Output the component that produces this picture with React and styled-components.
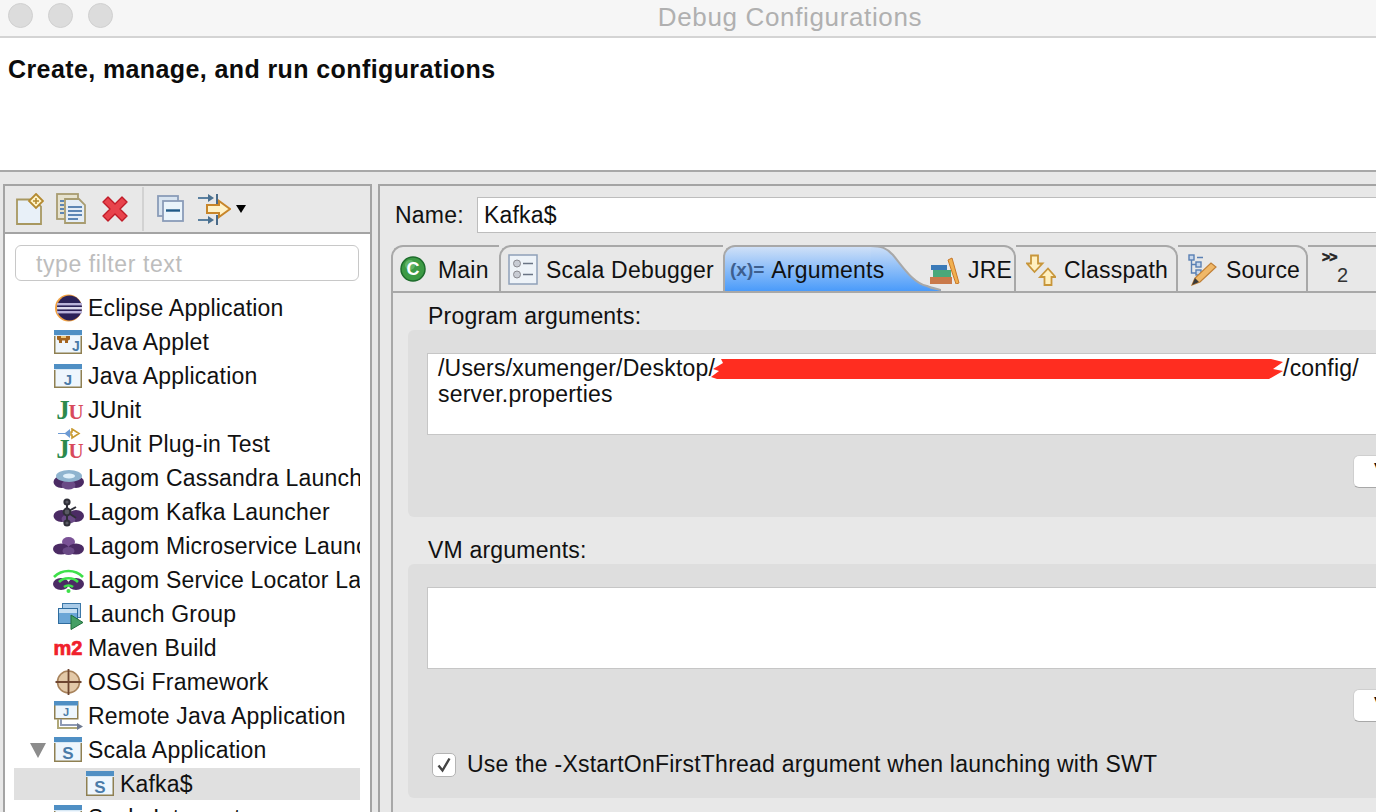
import React from 'react';
import styled, { createGlobalStyle } from 'styled-components';

const GlobalStyle = createGlobalStyle`
  html, body { margin: 0; padding: 0; background: #e8e8e8; }
  #root { width: 1376px; height: 812px; overflow: hidden; }
  * { box-sizing: border-box; }
`;

const Dialog = styled.div`
  width: 1580px;
  height: 812px;
  display: flex;
  flex-direction: column;
  background: #e8e8e8;
  font-family: "Liberation Sans", Arial, sans-serif;
  font-size: 23px;
  letter-spacing: 0.2px;
  color: #111;
`;

const TitleBar = styled.div`
  position: relative;
  height: 38px;
  flex: none;
  background: #f6f6f6;
  border-bottom: 2px solid #d4d4d4;
  display: flex;
  align-items: center;
  justify-content: center;
  padding-bottom: 2px;
`;

const Lights = styled.div`
  position: absolute;
  left: 8px;
  top: 3px;
  display: flex;
  gap: 15px;
`;

const Light = styled.span`
  width: 25px;
  height: 25px;
  border-radius: 50%;
  background: #dcdcdc;
  border: 1px solid #d0d0d0;
`;

const Title = styled.div`
  font-size: 26px;
  letter-spacing: 0.65px;
  color: #b0b0b0;
`;

const Banner = styled.div`
  height: 134px;
  flex: none;
  background: #fff;
  border-bottom: 2px solid #a8a8a8;
  padding: 15px 8px 0;
  font-size: 25px;
  font-weight: 700;
  line-height: 33px;
  letter-spacing: 0.4px;
  color: #0c0c0c;
`;

const Body = styled.div`
  flex: 1;
  min-height: 0;
  display: flex;
  padding: 12px 0 0 3px;
  gap: 6px;
`;

const LeftPane = styled.div`
  width: 369px;
  flex: none;
  border: 2px solid #a4a4a4;
  border-bottom: 0;
  background: #fff;
  display: flex;
  flex-direction: column;
  overflow: hidden;
`;

const Toolbar = styled.div`
  height: 48px;
  flex: none;
  background: #e8e8e8;
  border-bottom: 2px solid #a4a4a4;
  display: flex;
  align-items: center;
  padding-left: 11px;
`;

const ToolButton = styled.span`
  display: flex;
  flex: none;
  margin-right: ${(p) => p.$gap || 0}px;
`;

const ToolSeparator = styled.span`
  width: 2px;
  height: 44px;
  margin-right: 13px;
  background: #d2d2d2;
`;

const FilterWrap = styled.div`
  padding: 11px 11px 10px 10px;
  flex: none;
`;

const FilterInput = styled.div`
  height: 36px;
  border: 1px solid #c8c8c8;
  border-radius: 6px;
  padding: 2px 0 0 20px;
  display: flex;
  align-items: center;
  font-size: 23px;
  letter-spacing: 0.6px;
  color: #bdbdbd;
`;

const Tree = styled.div`
  flex: 1;
  min-height: 0;
  margin: 0 10px 0 9px;
  overflow: hidden;
`;

const TreeRow = styled.div`
  position: relative;
  height: 34px;
  display: flex;
  align-items: center;
  gap: 4px;
  white-space: nowrap;
  overflow: hidden;
  padding-left: ${(p) => p.$indent}px;
  background: ${(p) => (p.$selected ? 'linear-gradient(#fff 1px, #e0e0e0 1px, #e0e0e0 33px, #fff 33px)' : 'transparent')};
`;

const Twist = styled.span`
  position: absolute;
  left: 16px;
  top: 10px;
  width: 0;
  height: 0;
  border-left: 8px solid transparent;
  border-right: 8px solid transparent;
  border-top: 15px solid #8c8c8c;
`;

const RightPane = styled.div`
  flex: 1;
  min-width: 0;
  border-left: 2px solid #a4a4a4;
  border-top: 2px solid #a4a4a4;
  display: flex;
  flex-direction: column;
`;

const NameRow = styled.div`
  height: 59px;
  flex: none;
  display: flex;
  align-items: flex-start;
  padding: 11px 0 0 15px;
`;

const NameLabel = styled.label`
  width: 82px;
  line-height: 36px;
`;

const NameInput = styled.div`
  flex: 1;
  height: 36px;
  background: #fff;
  border: 1px solid #bdbdbd;
  padding-left: 6px;
  line-height: 35px;
`;

const Folder = styled.div`
  flex: 1;
  min-height: 0;
  margin-left: 11px;
  display: flex;
  flex-direction: column;
`;

const TabBar = styled.div`
  height: 48px;
  flex: none;
  display: flex;
  border-bottom: 2px solid #a8a8a8;
`;

const Tab = styled.div`
  position: relative;
  width: ${(p) => p.$w}px;
  flex: none;
  display: flex;
  align-items: center;
  gap: ${(p) => p.$gap}px;
  padding: 2px 0 0 ${(p) => p.$pad}px;
  border-top: 2px solid #a8a8a8;
  border-left: ${(p) => (p.$curve === 'left' ? '2px solid #a8a8a8' : '0')};
  border-right: ${(p) => (p.$curve === 'right' ? '2px solid #a8a8a8' : '0')};
  border-top-left-radius: ${(p) => (p.$curve === 'left' ? '12px' : '0')};
  border-top-right-radius: ${(p) => (p.$curve === 'right' ? '12px' : '0')};
  background: ${(p) => (p.$active ? 'linear-gradient(#cfe0f7, #4a9bfa)' : 'transparent')};
  white-space: nowrap;
`;

const TabLabel = styled.span`
  position: relative;
  z-index: 1;
`;

const TabTail = styled.svg`
  position: absolute;
  left: 100%;
  top: -2px;
  z-index: 0;
`;

const VarGlyph = styled.span`
  font-size: 19px;
  font-weight: 700;
  color: #3d5f8f;
  letter-spacing: 0;
`;

const MoreTabs = styled.div`
  width: 58px;
  flex: none;
  position: relative;
  font-size: 20px;
  padding: 17px 0 0 29px;
  color: #333;
  border-top: 2px solid #a8a8a8;
`;

const MoreChevron = styled.span`
  position: absolute;
  left: 14px;
  top: 2px;
  font-size: 14px;
  font-weight: 700;
  color: #222;
  letter-spacing: -1px;
  -webkit-text-stroke: 0.6px #222;
`;

const TabFiller = styled.div`
  flex: 1;
  border-top: 2px solid #a8a8a8;
`;

const TabContent = styled.div`
  flex: 1;
  min-height: 0;
  border-left: 2px solid #a8a8a8;
  padding: 8px 0 0 15px;
  display: flex;
  flex-direction: column;
`;

const GroupLabel = styled.div`
  height: ${(p) => p.$h}px;
  flex: none;
  display: flex;
  align-items: flex-end;
  padding-left: 20px;
  line-height: 27px;
`;

const Group = styled.div`
  flex: none;
  background: #dedede;
  border-radius: 6px 0 0 6px;
  padding: 23px 0 0 19px;
  height: ${(p) => p.$h}px;
`;

const TextArea = styled.div`
  height: 82px;
  background: #fff;
  border: 1px solid #c6c6c6;
  padding: 1px 10px;
  line-height: 26px;
  width: 1130px;
`;

const Redaction = styled.svg`
  display: inline-block;
  vertical-align: -4px;
  margin-left: -4px;
  height: 22px;
`;

const ButtonRow = styled.div`
  display: flex;
  margin-top: 20px;
  padding-left: 926px;
`;

const VarButton = styled.div`
  width: 130px;
  height: 33px;
  background: #fff;
  border: 1px solid #cfcfcf;
  border-bottom-color: #a8a8a8;
  border-radius: 6px;
  padding-left: 20px;
  line-height: 30px;
  font-size: 22px;
`;

const CheckRow = styled.div`
  display: flex;
  align-items: center;
  gap: 11px;
  margin: 29px 0 0 5px;
  letter-spacing: 0.23px;
`;

const Checkbox = styled.span`
  width: 24px;
  height: 24px;
  flex: none;
  background: #fff;
  border: 1px solid #b4b4b4;
  border-radius: 5px;
  display: flex;
  align-items: center;
  justify-content: center;
`;

/* ---- drawn icons ---- */

const Icon = ({ size = 32, h, children, view }) => (
  <svg width={size} height={h || size} viewBox={view || `0 0 ${size} ${h || size}`} style={{ flex: 'none' }}>
    {children}
  </svg>
);

const WindowBase = ({ x = 2, y = 4, w = 28, h = 24 }) => (
  <>
    <rect x={x + 0.75} y={y + 0.75} width={w - 1.5} height={h - 1.5} fill="#eef6fd" stroke="#8f8052" strokeWidth="1.5" />
    <rect x={x} y={y} width={w} height="5" fill="#4f8fc4" />
    <rect x={x} y={y + 5} width={w} height="1" fill="#d8e8f4" />
  </>
);

const Glyph = ({ x, y, size = 15, fill = '#4a7ba8', children, bold = true, family = '"Liberation Sans"', stroke }) => (
  <text x={x} y={y} fontSize={size} fill={fill} stroke={stroke} strokeWidth={stroke ? 0.7 : 0} fontWeight={bold ? 700 : 400} fontFamily={family} textAnchor="middle" letterSpacing="0">
    {children}
  </text>
);

const EclipseIcon = () => (
  <Icon>
    <circle cx="16.5" cy="16" r="13.5" fill="#f0a040" />
    <circle cx="17.5" cy="16" r="12.5" fill="#2a2158" />
    <rect x="5" y="11" width="25" height="2.4" fill="#b8b2da" />
    <rect x="5" y="15" width="25" height="2.4" fill="#dcd9ee" />
    <rect x="5" y="19" width="25" height="2.4" fill="#b8b2da" />
  </Icon>
);

const AppletIcon = () => (
  <Icon>
    <WindowBase />
    <path d="M5 10h13v3.500l-2 1v2.500h-3v-2.500h-3v2.500H7v-2.500l-2-1z" fill="#a4641e" />
    <path d="M9 10h5v2H9z" fill="#f0c878" />
    <Glyph x="24" y="25" size="14">J</Glyph>
  </Icon>
);

const JavaAppIcon = () => (
  <Icon>
    <WindowBase />
    <Glyph x="16" y="25" size="15">J</Glyph>
  </Icon>
);

const JUnitGlyphs = ({ y = 25 }) => (
  <>
    <Glyph x="11" y={y} size="27" fill="#2c8a4c" family='"Liberation Serif"'>J</Glyph>
    <Glyph x="24" y={y} size="21" fill="#d84a5c" family='"Liberation Serif"'>U</Glyph>
  </>
);

const JUnitIcon = () => (
  <Icon>
    <JUnitGlyphs />
  </Icon>
);

const JUnitPluginIcon = () => (
  <Icon>
    <JUnitGlyphs y={30} />
    <path d="M6 5h7l5-4v9l-5-4H6z" fill="#6c9ad4" />
    <path d="M20 1l7 4.500-7 4.500v-3h-1V4h1z" fill="#fff" stroke="#c89a30" strokeWidth="1.600" />
  </Icon>
);

const LagomBase = () => (
  <>
    <ellipse cx="9.500" cy="20" rx="8" ry="6" fill="#4b2b64" />
    <ellipse cx="24" cy="20" rx="8" ry="6" fill="#4b2b64" />
    <ellipse cx="16.500" cy="23" rx="7" ry="4.500" fill="#6a4a86" />
  </>
);

const CassandraIcon = () => (
  <Icon>
    <LagomBase />
    <ellipse cx="17" cy="14" rx="13" ry="6" fill="#8fb4cf" />
    <ellipse cx="17" cy="14" rx="6" ry="2.500" fill="#dff0fa" />
  </Icon>
);

const KafkaIcon = () => (
  <Icon>
    <LagomBase />
    <g stroke="#2f2f38" strokeWidth="2" fill="#5a5a64">
      <path d="M15 6v20M15 16l9-5M15 16l9 6" fill="none" />
      <circle cx="15" cy="6" r="2.600" />
      <circle cx="15" cy="16" r="3.400" />
      <circle cx="15" cy="27" r="2.600" />
    </g>
  </Icon>
);

const MicroserviceIcon = () => (
  <Icon>
    <ellipse cx="16.500" cy="12" rx="6.500" ry="5" fill="#7a5296" />
    <ellipse cx="9" cy="19" rx="8" ry="5.500" fill="#4b2b64" />
    <ellipse cx="24" cy="19" rx="8" ry="5.500" fill="#4b2b64" />
    <ellipse cx="16.500" cy="21" rx="6" ry="4" fill="#6a4a86" />
  </Icon>
);

const LocatorIcon = () => (
  <Icon>
    <ellipse cx="9" cy="20" rx="8" ry="6" fill="#4b2b64" />
    <ellipse cx="24" cy="20" rx="8" ry="6" fill="#4b2b64" />
    <g fill="none" stroke="#3ee04a" strokeWidth="2.600">
      <path d="M2 13c8-8 21-8 29 0" />
      <path d="M7 18c5-5 14-5 19 0" />
      <path d="M12 23c2.500-2 6.500-2 9 0" />
    </g>
    <circle cx="16.500" cy="27" r="2" fill="#3ee04a" />
  </Icon>
);

const LaunchGroupIcon = () => (
  <Icon>
    <rect x="10.500" y="5.500" width="18" height="14" fill="#a9cbe8" stroke="#3d78a8" />
    <rect x="6.500" y="10.500" width="19" height="15" fill="#6ba6d6" stroke="#2f6c9e" />
    <rect x="7" y="11" width="18" height="4" fill="#c6dff2" />
    <path d="M19 17l12 7.500-12 7z" fill="#45a065" stroke="#1f6e3a" />
  </Icon>
);

const MavenIcon = () => (
  <Icon>
    <Glyph x="16" y="23" size="20" fill="#f0202c" stroke="#f0202c">m2</Glyph>
  </Icon>
);

const OsgiIcon = () => (
  <Icon>
    <circle cx="16.500" cy="16" r="11" fill="#e3c9a8" stroke="#a8835c" strokeWidth="1.600" />
    <path d="M16.500 3v26M3.500 16h26" stroke="#6e4630" strokeWidth="1.800" />
  </Icon>
);

const RemoteIcon = () => (
  <Icon>
    <rect x="2.750" y="1.750" width="23" height="17" fill="#eef6fd" stroke="#8f8052" strokeWidth="1.500" />
    <rect x="2" y="1" width="24" height="4.500" fill="#4f8fc4" />
    <Glyph x="14" y="16" size="11">J</Glyph>
    <path d="M6 19v9h20" fill="none" stroke="#b0a878" strokeWidth="2" />
    <path d="M9 19v6h17" fill="none" stroke="#8e9ab4" strokeWidth="2" />
    <path d="M25 23l6 3.500-6 3.500z" fill="#6e7a90" />
  </Icon>
);

const ScalaIcon = () => (
  <Icon>
    <WindowBase y={3} h={25} />
    <Glyph x="16" y="25" size="17">S</Glyph>
  </Icon>
);

const MainTabIcon = () => (
  <Icon size={26} h={28}>
    <circle cx="13" cy="13" r="12" fill="#3c9a44" stroke="#1d6c2c" strokeWidth="1.500" />
    <circle cx="10" cy="9" r="5" fill="#7cc47e" opacity="0.6" />
    <Glyph x="13" y="19" size="18" fill="#fff">C</Glyph>
  </Icon>
);

const DebuggerIcon = () => (
  <Icon size={30} h={32} >
    <rect x="1" y="1" width="28" height="29" fill="#eef3f8" stroke="#8fa0b8" strokeWidth="1.500" />
    <circle cx="9" cy="9.500" r="3.500" fill="#c8ccd4" stroke="#8a8a90" />
    <circle cx="9" cy="20.500" r="3.500" fill="#c8ccd4" stroke="#8a8a90" />
    <path d="M15 9.500h10M15 20.500h10" stroke="#6a7484" strokeWidth="1.600" />
  </Icon>
);

const JreIcon = () => (
  <Icon size={30} h={28}>
    <rect x="0" y="21" width="22" height="7" fill="#c9794a" />
    <rect x="3" y="14" width="18" height="7" fill="#4aa87a" />
    <rect x="1" y="9" width="16" height="5" fill="#3a7ab8" />
    <path d="M18 4l4-2 7 25-3 1z" fill="#f0b050" stroke="#c8782a" />
  </Icon>
);

const ClasspathIcon = () => (
  <Icon size={30} h={32}>
    <path d="M5 1.500h7v8h4.500L8.500 18 1 9.500h4z" fill="#fff0c0" stroke="#c8963a" strokeWidth="1.800" />
    <path d="M18.500 31v-8h-4.500l8-8.500 7.500 8.500h-4v8z" fill="#fff0c0" stroke="#c8963a" strokeWidth="1.800" />
  </Icon>
);

const SourceIcon = () => (
  <Icon size={30} h={32}>
    <g fill="#c8d8ec" stroke="#5a80b4" strokeWidth="1.400">
      <rect x="1" y="1" width="5" height="5" />
      <rect x="8" y="8" width="5" height="5" />
      <rect x="8" y="16" width="5" height="5" />
    </g>
    <path d="M3.500 6v13H8M3.500 10.500H8M9 3.500h6" fill="none" stroke="#5a80b4" strokeWidth="1.400" />
    <path d="M4 31l3-7L23 9l5 4-16 15z" fill="#f0b868" stroke="#c08038" strokeWidth="1.200" />
    <path d="M4 31l3-7 4 4z" fill="#3a3a3a" />
  </Icon>
);

const NewConfigIcon = () => (
  <Icon size={28} h={32}>
    <path d="M1 6.500h17l7 7V31H1z" fill="#e8f0f8" stroke="#a89860" strokeWidth="1.800" />
    <path d="M20 1l7 7-7 7-7-7z" fill="#fff4c8" stroke="#b48a30" strokeWidth="1.800" />
    <path d="M20 5v6M17 8h6" stroke="#b48a30" strokeWidth="1.600" />
  </Icon>
);

const DuplicateIcon = () => (
  <Icon size={30} h={32}>
    <rect x="1" y="1" width="21" height="25" fill="#e6e2ce" stroke="#a89c70" strokeWidth="1.800" />
    <path d="M9 6h14l6 6v18H9z" fill="#e4edf6" stroke="#a89c70" strokeWidth="1.800" />
    <path d="M12 14h14M12 18h14M12 22h14M12 26h10M4 8h4M4 12h4M4 16h4M4 20h4" stroke="#5d86b4" strokeWidth="1.800" />
  </Icon>
);

const DeleteIcon = () => (
  <Icon size={28} h={28}>
    <path d="M2 7l5-5 7 7 7-7 5 5-7 7 7 7-5 5-7-7-7 7-5-5 7-7z" fill="#e8434c" stroke="#c01c28" strokeWidth="1.400" strokeLinejoin="round" />
  </Icon>
);

const CollapseIcon = () => (
  <Icon size={27} h={28}>
    <rect x="1" y="1" width="20" height="20" fill="#d8e4f0" stroke="#8a9cb8" strokeWidth="1.800" />
    <rect x="6" y="6" width="20" height="20" fill="#eaf4fb" stroke="#8a9cb8" strokeWidth="1.800" />
    <path d="M9 15.500h14" stroke="#1f5a88" strokeWidth="2.400" />
  </Icon>
);

const FilterIcon = () => (
  <Icon size={33} h={32}>
    <path d="M0 5h11M0 27h11" stroke="#5a80a0" strokeWidth="2" />
    <path d="M10 1l6 4-6 4zM10 23l6 4-6 4z" fill="#4a7090" />
    <path d="M19 1v10M19 22v10" stroke="#4a6a88" strokeWidth="2" />
    <path d="M9 12h12V8l11 8-11 8v-4H9z" fill="#fff2c8" stroke="#c8862a" strokeWidth="2" />
  </Icon>
);

const DropArrow = styled.span`
  margin-left: 5px;
  width: 0;
  height: 0;
  border-left: 5px solid transparent;
  border-right: 5px solid transparent;
  border-top: 8px solid #000;
`;

const treeItems = [
  { label: 'Eclipse Application', icon: EclipseIcon },
  { label: 'Java Applet', icon: AppletIcon },
  { label: 'Java Application', icon: JavaAppIcon },
  { label: 'JUnit', icon: JUnitIcon },
  { label: 'JUnit Plug-in Test', icon: JUnitPluginIcon },
  { label: 'Lagom Cassandra Launcher', icon: CassandraIcon },
  { label: 'Lagom Kafka Launcher', icon: KafkaIcon },
  { label: 'Lagom Microservice Launcher', icon: MicroserviceIcon },
  { label: 'Lagom Service Locator Launcher', icon: LocatorIcon },
  { label: 'Launch Group', icon: LaunchGroupIcon },
  { label: 'Maven Build', icon: MavenIcon },
  { label: 'OSGi Framework', icon: OsgiIcon },
  { label: 'Remote Java Application', icon: RemoteIcon },
  { label: 'Scala Application', icon: ScalaIcon, open: true },
  { label: 'Kafka$', icon: ScalaIcon, level: 1, selected: true },
  { label: 'Scala Interpreter', icon: ScalaIcon },
];

export default function App() {
  return (
    <Dialog>
      <GlobalStyle />
      <TitleBar>
        <Lights>
          <Light />
          <Light />
          <Light />
        </Lights>
        <Title>Debug Configurations</Title>
      </TitleBar>
      <Banner>Create, manage, and run configurations</Banner>
      <Body>
        <LeftPane>
          <Toolbar>
            <ToolButton $gap={12}><NewConfigIcon /></ToolButton>
            <ToolButton $gap={15}><DuplicateIcon /></ToolButton>
            <ToolButton $gap={13}><DeleteIcon /></ToolButton>
            <ToolSeparator />
            <ToolButton $gap={14}><CollapseIcon /></ToolButton>
            <ToolButton><FilterIcon /></ToolButton>
            <DropArrow />
          </Toolbar>
          <FilterWrap>
            <FilterInput>type filter text</FilterInput>
          </FilterWrap>
          <Tree>
            {treeItems.map((item) => {
              const ItemIcon = item.icon;
              return (
                <TreeRow key={item.label} $indent={item.level ? 70 : 38} $selected={item.selected}>
                  {item.open && <Twist />}
                  <ItemIcon />
                  {item.label}
                </TreeRow>
              );
            })}
          </Tree>
        </LeftPane>
        <RightPane>
          <NameRow>
            <NameLabel>Name:</NameLabel>
            <NameInput>Kafka$</NameInput>
          </NameRow>
          <Folder>
            <TabBar>
              <Tab $curve="left" $w={108} $pad={7} $gap={12}><MainTabIcon />Main</Tab>
              <Tab $curve="left" $w={224} $pad={7} $gap={8}><DebuggerIcon />Scala Debugger</Tab>
              <Tab $curve="left" $active $w={148} $pad={5} $gap={7}>
                <VarGlyph>(x)=</VarGlyph>
                <TabLabel>Arguments</TabLabel>
                <TabTail width="70" height="46" viewBox="0 0 70 46">
                  <defs>
                    <linearGradient id="tailFill" x1="0" y1="0" x2="0" y2="1">
                      <stop offset="0" stopColor="#cfe0f7" />
                      <stop offset="1" stopColor="#4a9bfa" />
                    </linearGradient>
                  </defs>
                  <path d="M0 1C10 1 16 3 22 10C32 22 42 38 56 41C60 43 66 44 70 45V46H0Z" fill="url(#tailFill)" />
                  <path d="M0 1C10 1 16 3 22 10C32 22 42 38 56 41C60 43 66 44 70 45" fill="none" stroke="#a8a8a8" strokeWidth="2" />
                </TabTail>
              </Tab>
              <Tab $curve="right" $w={145} $pad={59} $gap={8}><JreIcon />JRE</Tab>
              <Tab $curve="right" $w={162} $pad={10} $gap={8}><ClasspathIcon />Classpath</Tab>
              <Tab $curve="right" $w={130} $pad={10} $gap={8}><SourceIcon />Source</Tab>
              <MoreTabs>
                <MoreChevron>&gt;&gt;</MoreChevron>
                2
              </MoreTabs>
              <TabFiller />
            </TabBar>
            <TabContent>
              <GroupLabel $h={29}>Program arguments:</GroupLabel>
              <Group $h={187}>
                <TextArea>
                  /Users/xumenger/Desktop/
                  <Redaction width="572" viewBox="0 0 572 22">
                    <path d="M10 1H560L572 4 562 11 572 13 558 21H6L0 19 8 13 2 11 12 5Z" fill="#ff2d20" />
                  </Redaction>
                  /config/
                  <br />
                  server.properties
                </TextArea>
                <ButtonRow><VarButton>Variables...</VarButton></ButtonRow>
              </Group>
              <GroupLabel $h={47}>VM arguments:</GroupLabel>
              <Group $h={234}>
                <TextArea />
                <ButtonRow><VarButton>Variables...</VarButton></ButtonRow>
                <CheckRow>
                  <Checkbox>
                    <svg width="16" height="16" viewBox="0 0 16 16">
                      <path d="M2.500 8.500l4 5 7-12" fill="none" stroke="#444" strokeWidth="2.400" />
                    </svg>
                  </Checkbox>
                  Use the -XstartOnFirstThread argument when launching with SWT
                </CheckRow>
              </Group>
            </TabContent>
          </Folder>
        </RightPane>
      </Body>
    </Dialog>
  );
}
